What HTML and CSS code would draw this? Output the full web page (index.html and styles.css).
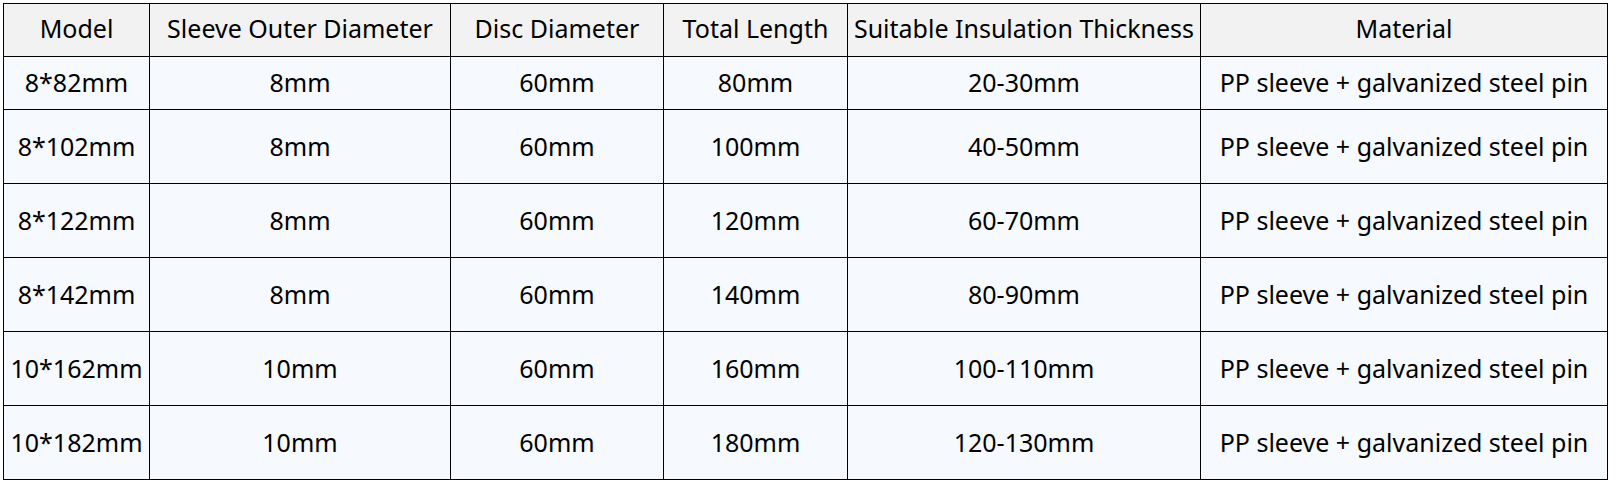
FILE: index.html
```html
<!DOCTYPE html>
<html lang="en">
<head>
<meta charset="utf-8">
<title>Insulation Fixing Pins</title>
<link rel="stylesheet" href="styles.css">
</head>
<body>
<table class="spec">
  <colgroup>
    <col class="c1"><col class="c2"><col class="c3"><col class="c4"><col class="c5"><col class="c6">
  </colgroup>
  <thead>
    <tr class="head">
      <th>Model</th><th>Sleeve Outer Diameter</th><th>Disc Diameter</th><th>Total Length</th><th>Suitable Insulation Thickness</th><th>Material</th>
    </tr>
  </thead>
  <tbody>
    <tr class="short"><td>8*82mm</td><td>8mm</td><td>60mm</td><td>80mm</td><td>20-30mm</td><td>PP sleeve + galvanized steel pin</td></tr>
    <tr><td>8*102mm</td><td>8mm</td><td>60mm</td><td>100mm</td><td>40-50mm</td><td>PP sleeve + galvanized steel pin</td></tr>
    <tr><td>8*122mm</td><td>8mm</td><td>60mm</td><td>120mm</td><td>60-70mm</td><td>PP sleeve + galvanized steel pin</td></tr>
    <tr><td>8*142mm</td><td>8mm</td><td>60mm</td><td>140mm</td><td>80-90mm</td><td>PP sleeve + galvanized steel pin</td></tr>
    <tr><td>10*162mm</td><td>10mm</td><td>60mm</td><td>160mm</td><td>100-110mm</td><td>PP sleeve + galvanized steel pin</td></tr>
    <tr><td>10*182mm</td><td>10mm</td><td>60mm</td><td>180mm</td><td>120-130mm</td><td>PP sleeve + galvanized steel pin</td></tr>
  </tbody>
</table>
</body>
</html>
```

FILE: styles.css
```css
html, body {
  margin: 0;
  background: #ffffff;
}
body {
  padding: 3px 0 0 3px;
  font-family: "Noto Sans", "Open Sans", sans-serif;
  color: #000;
}
.spec {
  border-collapse: collapse;
  table-layout: fixed;
  width: 1605px;
  font-size: 25px;
  line-height: 30px;
}
.c1 { width: 146px; }
.c2 { width: 301px; }
.c3 { width: 213px; }
.c4 { width: 184px; }
.c5 { width: 353px; }
.c6 { width: 407px; }
.spec th, .spec td {
  border: 1px solid #000;
  padding: 0 0 2px;
  text-align: center;
  vertical-align: middle;
  font-weight: normal;
  white-space: nowrap;
}
.spec th {
  background: #f2f2f2;
  padding-bottom: 4px;
}
.spec td {
  background: #f6f9fd;
}
.head { height: 53px; }
.spec tbody tr { height: 74px; }
.spec tbody tr.short { height: 53px; }
```
